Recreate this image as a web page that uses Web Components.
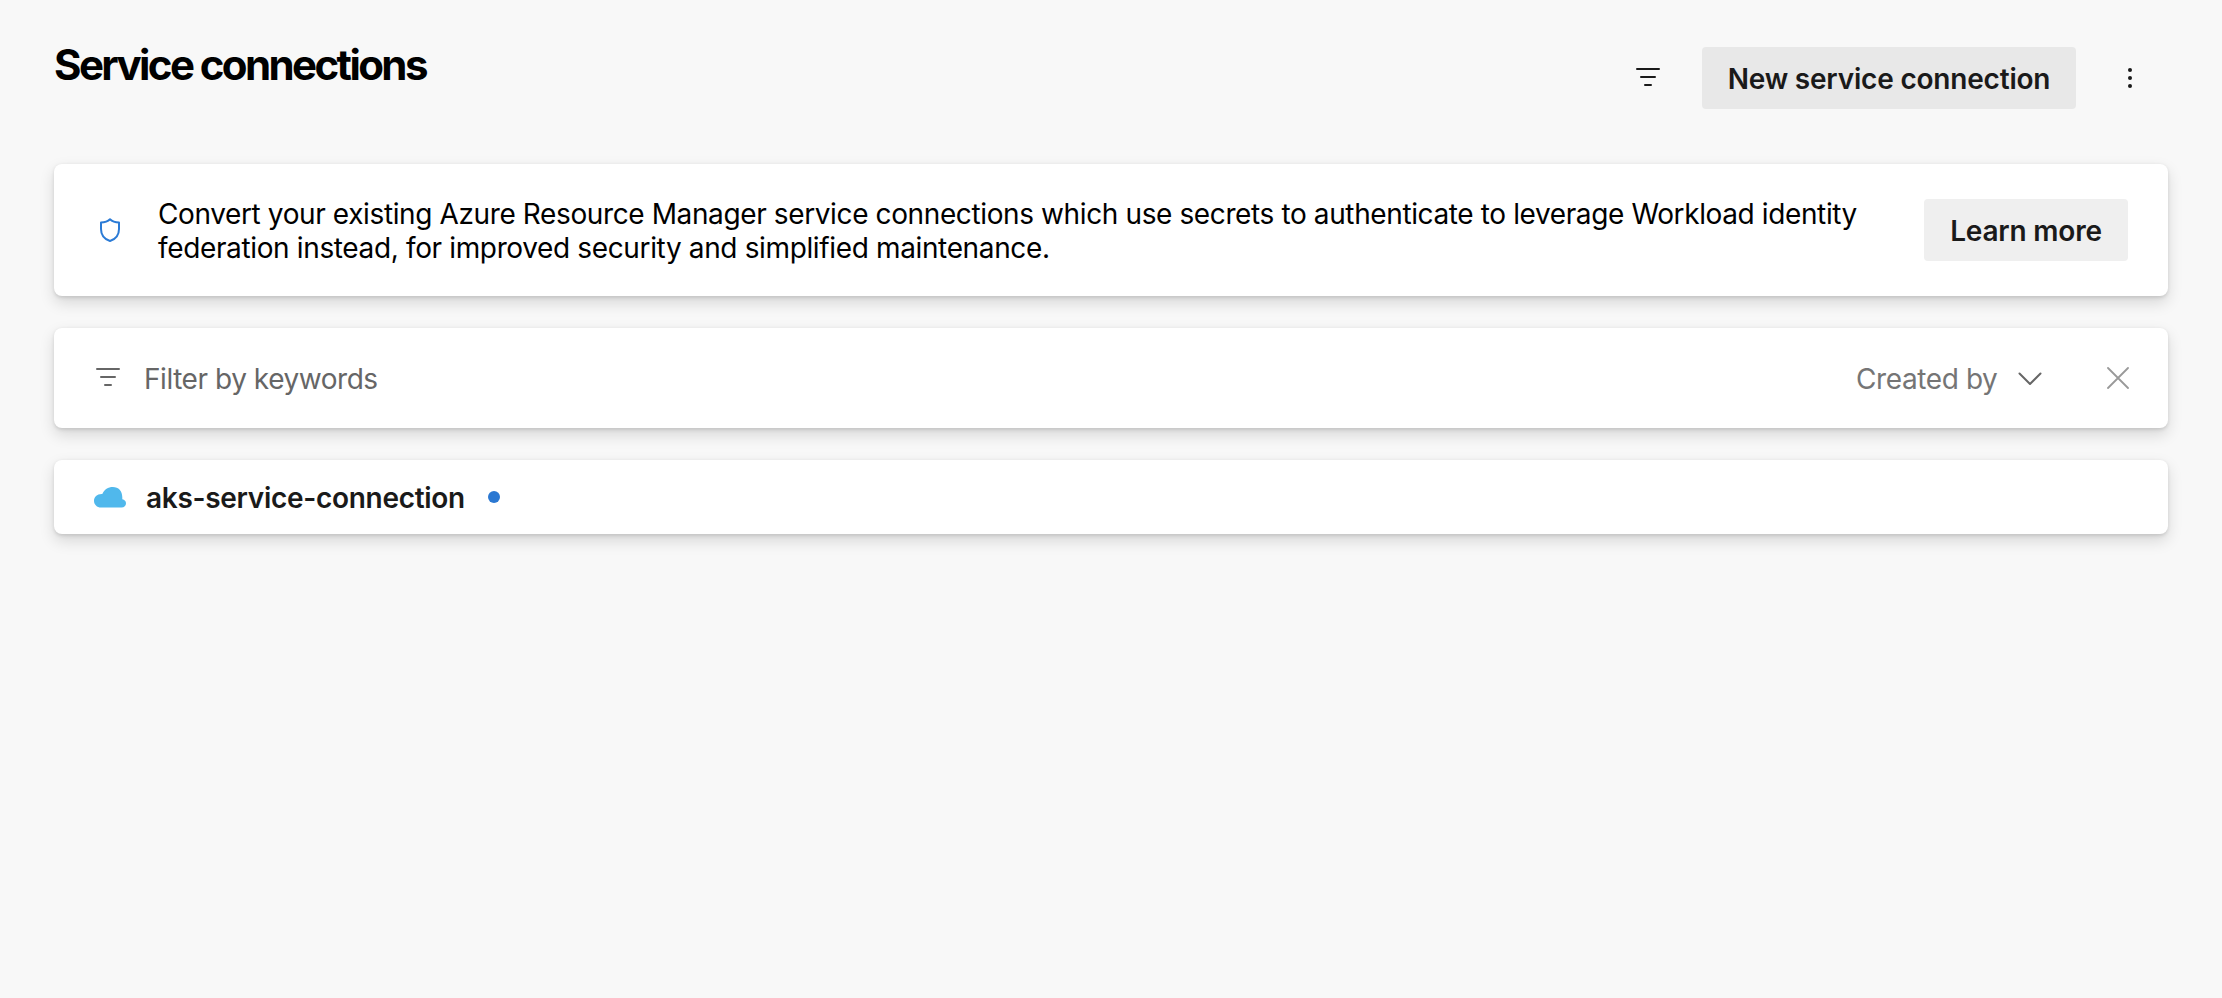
<!DOCTYPE html>
<html lang="en">
<head>
<meta charset="utf-8">
<title>Service connections</title>
<style>
body{margin:0;background:#f8f8f8;font-family:Inter,"Liberation Sans",sans-serif;font-size:28px;color:#000}
</style>
</head>
<body>
<service-page></service-page>
<script>
const define=(name,html)=>{
  customElements.define(name,class extends HTMLElement{
    constructor(){
      super();
      const t=document.createElement('template');
      t.innerHTML=html;
      this.attachShadow({mode:'open'}).append(t.content.cloneNode(true));
    }
  });
};

define('ui-filter-icon',`<style>:host{display:block;width:24px;height:18px;flex:none}svg{display:block}</style>
<svg width="24" height="18" viewBox="0 0 24 18" fill="none" stroke="currentColor" stroke-width="2" stroke-linecap="round"><path d="M1 1H23M5 9H19M9 17H15"/></svg>`);

define('ui-button',`<style>:host{display:flex;align-items:center;justify-content:center;height:62px;border-radius:4px;background:var(--button-bg,#efefef);color:#1a1a1a;font-weight:600;letter-spacing:-.2px;white-space:nowrap;flex:none;box-sizing:border-box}span{display:block;line-height:34px;padding-top:2px}</style><span><slot></slot></span>`);

define('ui-card',`<style>:host{display:flex;align-items:center;background:#fff;border-radius:8px;box-sizing:border-box;box-shadow:0 6.4px 14.4px rgba(0,0,0,.132),0 1.2px 3.6px rgba(0,0,0,.108)}</style><slot></slot>`);

define('page-header',`<style>
:host{display:flex;height:164px;box-sizing:border-box;padding:37px 36px 0 0}
h1{margin:0;font-size:42px;line-height:56px;font-weight:700;letter-spacing:-2.6px;white-space:nowrap}
.actions{display:flex;align-items:center;height:62px;margin:10px 0 0 auto;color:#1a1a1a}
ui-button{--button-bg:#e8e8e8;width:374px;margin:0 52px 0 42px}
ui-filter-icon{margin-top:-2px}
svg{display:block}
</style>
<h1>Service connections</h1>
<div class="actions"><ui-filter-icon></ui-filter-icon><ui-button>New service connection</ui-button>
<svg width="4" height="20" viewBox="0 0 4 20" fill="currentColor"><circle cx="2" cy="2" r="2"/><circle cx="2" cy="10" r="2"/><circle cx="2" cy="18" r="2"/></svg></div>`);

define('info-banner',`<style>
:host{display:block}
ui-card{height:132px;padding:0 40px 0 46px}
svg{display:block;flex:none}
p{margin:2px 0 0 38px;line-height:34px;white-space:nowrap;flex:1}
.a{letter-spacing:-.383px}.b{letter-spacing:-.36px}
ui-button{width:204px}
</style>
<ui-card><svg width="20" height="24" viewBox="0 0 20 24" fill="none" stroke="#2b7bd6" stroke-width="2" stroke-linejoin="round"><path d="M10 1.3C7.6 3.7 4.7 4.5 1 4.6V11C1 17.3 4.7 21.3 10 23 15.3 21.3 19 17.3 19 11V4.6C15.3 4.5 12.4 3.7 10 1.3Z"/></svg>
<p><span class="a">Convert your existing Azure Resource Manager service connections which use secrets to authenticate to leverage Workload identity</span><br><span class="b">federation instead, for improved security and simplified maintenance.</span></p>
<ui-button>Learn more</ui-button></ui-card>`);

define('filter-bar',`<style>
:host{display:block}
ui-card{height:100px;padding:0 39px 0 42px;color:#666}
ui-filter-icon{margin-top:-2px}
.k,.c{line-height:34px;margin-top:2px;white-space:nowrap}
.k{margin-left:24px;letter-spacing:-.45px}
.c{margin-left:auto;width:142px;color:#757575;letter-spacing:-.4px}
svg{display:block;flex:none}
.v{margin:1px 65px 0 20px}
</style>
<ui-card><ui-filter-icon></ui-filter-icon><div class="k">Filter by keywords</div><div class="c">Created by</div>
<svg class="v" width="24" height="14" viewBox="0 0 24 14" fill="none" stroke="#666" stroke-width="2" stroke-linecap="round" stroke-linejoin="round"><path d="M1.5 1.5 12 12 22.5 1.5"/></svg>
<svg width="22" height="22" viewBox="0 0 22 22" fill="none" stroke="#999" stroke-width="1.8" stroke-linecap="round"><path d="M1 1 21 21M21 1 1 21"/></svg></ui-card>`);

define('connection-row',`<style>
:host{display:block}
ui-card{height:74px;padding:0 40px}
.n{font-weight:600;color:#1a1a1a;line-height:34px;margin:2px 0 0 20px;width:320px;white-space:nowrap;letter-spacing:-.3px}
svg{display:block;flex:none}
i{width:12px;height:12px;border-radius:50%;background:#2b78d2;margin-left:22px}
</style>
<ui-card><svg width="32" height="22" viewBox="0 0 32 22" fill="#50b8ec"><path d="M7 21.5C3 21.5 0 18.5 0 14.7 0 11 3.200 7.600 8.300 7.900 10.300 3.700 14.200 1 18.800 1 24.600 1 28.300 4.800 28.300 11.200V13.200C30.600 13.500 32 15.200 32 17.300 32 19.800 30.200 21.500 27.500 21.500Z"/></svg>
<div class="n"><slot></slot></div><i></i></ui-card>`);

define('service-page',`<style>
:host{display:block;height:998px;box-sizing:border-box;padding:0 54px;overflow:hidden}
main{display:flex;flex-direction:column;gap:32px}
</style>
<page-header></page-header>
<main><info-banner></info-banner><filter-bar></filter-bar><connection-row>aks-service-connection</connection-row></main>`);
</script>
</body>
</html>
